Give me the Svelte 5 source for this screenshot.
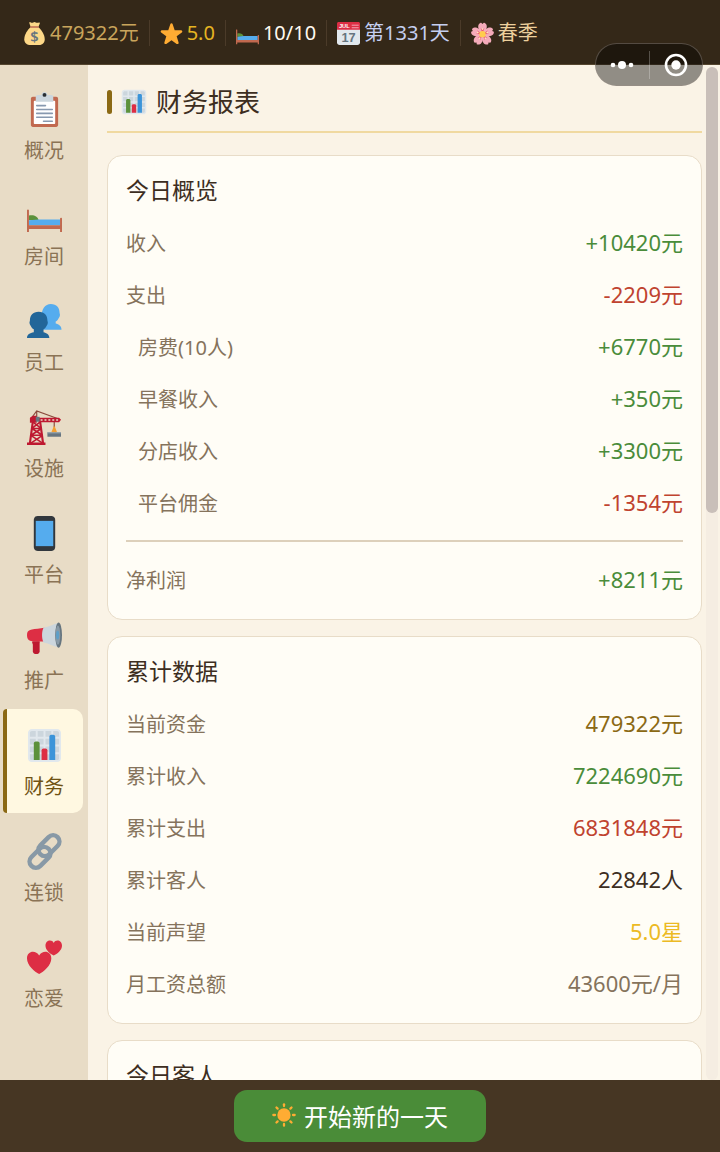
<script>
  const stats = [
    { icon: 'money', text: '479322元', tone: 'gold' },
    { icon: 'star', text: '5.0', tone: 'amber' },
    { icon: 'bed', text: '10/10', tone: 'plain' },
    { icon: 'calendar', text: '第1331天', tone: 'sky' },
    { icon: 'blossom', text: '春季', tone: 'sand' }
  ];

  const tabs = [
    { icon: 'clipboard', label: '概况' },
    { icon: 'bed', label: '房间' },
    { icon: 'people', label: '员工' },
    { icon: 'crane', label: '设施' },
    { icon: 'phone', label: '平台' },
    { icon: 'megaphone', label: '推广' },
    { icon: 'chart', label: '财务' },
    { icon: 'link', label: '连锁' },
    { icon: 'hearts', label: '恋爱' }
  ];

  let active = $state('财务');

  const today = [
    { label: '收入', value: '+10420元', tone: 'up' },
    { label: '支出', value: '-2209元', tone: 'down' },
    { label: '房费(10人)', value: '+6770元', tone: 'up', sub: true },
    { label: '早餐收入', value: '+350元', tone: 'up', sub: true },
    { label: '分店收入', value: '+3300元', tone: 'up', sub: true },
    { label: '平台佣金', value: '-1354元', tone: 'down', sub: true }
  ];

  const totals = [
    { label: '当前资金', value: '479322元', tone: 'fund' },
    { label: '累计收入', value: '7224690元', tone: 'up' },
    { label: '累计支出', value: '6831848元', tone: 'down' },
    { label: '累计客人', value: '22842人', tone: 'ink' },
    { label: '当前声望', value: '5.0星', tone: 'fame' },
    { label: '月工资总额', value: '43600元/月', tone: 'muted' }
  ];
</script>

{#snippet icon(name)}
  <svg class="icon" viewBox="0 0 36 36" aria-hidden="true">
    {#if name === 'money'}
      <path fill="#FDD888" d="M12 8C7 13 2 20 2 27c0 6 4 9 10 9h13c6 0 9-4 9-9 0-7-5-14-10-19z" />
      <path fill="#FDD888" d="M10 2c-1-2 1-2 3-1l2 0 3-1 3 1 3 0c2-1 3 0 2 2l-2 5H12z" />
      <rect fill="#BF6952" x="11" y="6.500" width="14" height="2.500" rx="1.200" />
      <text x="18" y="31" text-anchor="middle" font-family="Noto Sans" font-size="23" font-weight="600" fill="#67757F">$</text>
    {:else if name === 'star'}
      <path fill="#FFAC33" d="M27.287 34.627c-.404 0-.806-.124-1.152-.371L18 28.422l-8.135 5.834c-.343.247-.744.37-1.146.37-.408 0-.815-.127-1.164-.383-.681-.504-.963-1.389-.702-2.197l3.034-9.792-8.062-5.681c-.685-.505-.97-1.393-.708-2.205.264-.809 1.016-1.357 1.866-1.363l9.947-.014 3.179-9.549c.268-.804 1.022-1.348 1.871-1.348.849 0 1.603.543 1.871 1.348l3.133 9.549 9.994.014c.851.006 1.605.554 1.867 1.363.262.811-.022 1.7-.708 2.205l-8.064 5.681 3.034 9.792c.262.808-.021 1.693-.704 2.197-.345.256-.752.384-1.163.384z" />
    {:else if name === 'bed'}
      <path fill="#5C913B" d="M2 22v-4c4-1 9 0 10 5H2z" />
      <path fill="#55ACEE" d="M2 28v-5l10-1h22v6z" />
      <path fill="#C1694F" d="M0 12.500c0-1 2-1 2 0V28h32v-7c0-1 2-1 2 0v14h-2v-3H2v3H0z" />
    {:else if name === 'calendar'}
      <path fill="#E1E8ED" d="M36 32c0 2.209-1.791 4-4 4H4c-2.209 0-4-1.791-4-4V9h36z" />
      <path fill="#DD2E44" d="M0 12V3c0-2 1-3 3-3h30c2 0 3 1 3 3v9z" />
      <path stroke="#F4ABBA" stroke-width="1.500" d="M23 5h11M23 9h11" />
      <text x="3" y="9" font-family="Liberation Sans" font-size="9" font-weight="700" fill="#FFF">JUL</text>
      <text x="18" y="31" text-anchor="middle" font-family="Liberation Sans" font-size="20" font-weight="700" fill="#66757F">17</text>
    {:else if name === 'blossom'}
      {#each [0, 72, 144, 216, 288] as turn}
        <path fill="#F4ABBA" transform="rotate({turn} 18 19)" d="M18 19C12 14 10 8 12 4c1-2 3-3 4-3l2 2 2-2c1 0 3 1 4 3 2 4 0 10-6 15z" />
        <path fill="#EA596E" transform="rotate({turn} 18 19)" d="M18 19l-3-10 3 4 3-4z" />
      {/each}
      <circle fill="#FFCC4D" cx="18" cy="19" r="5" />
      <g fill="#FFE8B6">
        <circle cx="18" cy="11" r="1.300" /><circle cx="10.500" cy="16.500" r="1.300" /><circle cx="25.500" cy="16.500" r="1.300" />
        <circle cx="13.500" cy="25.500" r="1.300" /><circle cx="22.500" cy="25.500" r="1.300" />
      </g>
    {:else if name === 'clipboard'}
      <path fill="#C1694F" d="M32 34c0 1.104-.896 2-2 2H6c-1.104 0-2-.896-2-2V7c0-1.104.896-2 2-2h24c1.104 0 2 .896 2 2v27z" />
      <path fill="#FFF" d="M29 32c0 .553-.447 1-1 1H8c-.552 0-1-.447-1-1V10c0-.552.448-1 1-1h20c.553 0 1 .448 1 1v22z" />
      <path fill="#CCD6DD" d="M25 3h-4c0-1.657-1.343-3-3-3s-3 1.343-3 3h-4c-1.104 0-2 .896-2 2v5h18V5c0-1.104-.896-2-2-2z" />
      <circle fill="#292F33" cx="18" cy="3" r="2" />
      <path stroke="#8899AF" stroke-width="1.600" stroke-linecap="round" d="M10 14h9M10 18h16M10 22h16M10 26h16M17 30h9" />
    {:else if name === 'people'}
      <path fill="#55ACEE" d="M24.500 0c6 0 9 4 9 9 0 1 1 2 0 4-1 1-1 3-4 5v2c3 1 6 2 6 6.500H15V18c0-2 0-4 0-5 0-8 3.500-13 9.500-13z" />
      <path fill="#269" d="M12 8c6 0 9 4 9 9 0 1 1 2 0 4-1 1-1 3-4 5v3c3 1 6 2 6 6H0c0-4 3-5 7-6v-3c-3-2-3-4-4-5-1-2 0-3 0-4 0-5 3-9 9-9z" />
    {:else if name === 'crane'}
      <path fill="none" stroke="#8B4A3C" stroke-width="1.200" d="M4 9l6-8 22 8M10 1v8M28 12v6" />
      <path fill="none" stroke="#BE1931" stroke-width="2.200" d="M6 12L3 34M13.500 12l3 22" />
      <path fill="none" stroke="#BE1931" stroke-width="1.600" d="M5 19h10M4 26h12M5.500 12l9 7M14 12l-9 7M5 19l11 7M15 19L4 26M4 26l12 8M16 26L4 34" />
      <path fill="#BE1931" d="M0 33.500h19V36H0zM3 8l3-2h4v7H3zM12 8h21l2 2-2 2.500H12z" />
      <path fill="#66757F" d="M9 7h4v5H9z" />
      <path stroke="#E8DCC6" stroke-width="1.600" stroke-dasharray="2 2" d="M14 10.300h18" />
      <path fill="none" stroke="#F4A030" stroke-width="1.800" d="M28 18l-2 5M28 18l2 5M28 17v6" />
      <path fill="#67757F" d="M21 23h14v4.500H21z" />
      <path fill="#99AAB5" d="M21 23h14v1H21z" />
    {:else if name === 'phone'}
      <path fill="#31373D" d="M11 36s-4 0-4-4V4s0-4 4-4h14s4 0 4 4v28s0 4-4 4H11z" />
      <path fill="#55ACEE" d="M9 5h18v26H9z" />
    {:else if name === 'megaphone'}
      <path fill="#BE1931" d="M6 20h7v10c0 4-7 4-7 0V20z" />
      <path fill="#DD2E44" d="M4 8c5-1 9-1 14-2v14c-5 0-9 0-14-.500C1 19 0 16.500 0 13.500S1 8.500 4 8z" />
      <path fill="#BE1931" d="M5 20h8l-1 3H6z" />
      <path fill="#CCD6DD" d="M17 6c6-1 10-4 15-5v25c-5-1-9-4-15-5-2-4-2-11 0-15z" />
      <ellipse fill="#66757F" cx="32.500" cy="13.500" rx="3.500" ry="13" />
      <ellipse fill="#8899A6" cx="31.800" cy="13.500" rx="2.400" ry="10" />
      <ellipse fill="#5D9FC9" cx="31.500" cy="13.500" rx="1.600" ry="4.500" />
    {:else if name === 'chart'}
      <path fill="#CCD6DD" d="M31 2H5C3.343 2 2 3.343 2 5v26c0 1.657 1.343 3 3 3h26c1.657 0 3-1.343 3-3V5c0-1.657-1.343-3-3-3z" />
      <path fill="#E1E8ED" d="M31 1H5C2.791 1 1 2.791 1 5v26c0 2.209 1.791 4 4 4h26c2.209 0 4-1.791 4-4V5c0-2.209-1.791-4-4-4zm0 2c1.103 0 2 .897 2 2v4h-6V3h4zm-4 16h6v6h-6v-6zm0-2v-6h6v6h-6zM25 3v6h-6V3h6zm-6 8h6v6h-6v-6zm0 8h6v6h-6v-6zM17 3v6h-6V3h6zm-6 8h6v6h-6v-6zm0 8h6v6h-6v-6zM3 5c0-1.103.897-2 2-2h4v6H3V5zm0 6h6v6H3v-6zm0 8h6v6H3v-6zm2 14c-1.103 0-2-.897-2-2v-4h6v6H5zm6 0v-6h6v6h-6zm8 0v-6h6v6h-6zm12 0h-4v-6h6v4c0 1.103-.897 2-2 2z" />
      <path fill="#5C913B" d="M13 33H7V16c0-1.104.896-2 2-2h2c1.104 0 2 .896 2 2v17z" />
      <path fill="#3B94D9" d="M29 33h-6V9c0-1.104.896-2 2-2h2c1.104 0 2 .896 2 2v24z" />
      <path fill="#DD2E44" d="M21 33h-6V23c0-1.104.896-2 2-2h2c1.104 0 2 .896 2 2v10z" />
    {:else if name === 'link'}
      <g fill="none" stroke="#8899A6" stroke-width="4.600" transform="rotate(-45 18 18)">
        <rect x="-2" y="12.500" width="25" height="13" rx="6.500" />
        <rect x="13" y="10.500" width="25" height="13" rx="6.500" />
      </g>
    {:else if name === 'hearts'}
      <g fill="#DD2E44">
        <path d="M12.500 35C8 33 0 26 0 19c0-8 9-9 12.500-3C16 10 25 11 25 19c0 7-8 14-12.500 16z" />
        <path d="M27.500 16C24 14.500 19 10.500 19 6c0-6 6.500-7 8.500-3C29.500-1 36 0 36 6c0 4.500-5 8.500-8.500 10z" />
      </g>
    {:else if name === 'sun'}
      <circle fill="#FFAC33" cx="18" cy="18" r="10" />
      <g stroke="#FFAC33" stroke-width="3.400" stroke-linecap="round">
        {#each [0, 45, 90, 135, 180, 225, 270, 315] as turn}
          <path transform="rotate({turn} 18 18)" d="M18 2v2.500" />
        {/each}
      </g>
    {/if}
  </svg>
{/snippet}

{#snippet row(item)}
  <div class="row" class:sub={item.sub}>
    <dt>{item.label}</dt>
    <dd class={item.tone}>{item.value}</dd>
  </div>
{/snippet}

<div class="app">
  <header class="topbar">
    {#each stats as s}
      <span class="stat {s.tone}">{@render icon(s.icon)}<span>{s.text}</span></span>
    {/each}
    <div class="capsule">
      <button type="button" aria-label="更多">
        <svg viewBox="0 0 24 24" aria-hidden="true">
          <g fill="#fff"><circle cx="3" cy="12" r="2.300" /><circle cx="12" cy="12" r="4" /><circle cx="21" cy="12" r="2.300" /></g>
        </svg>
      </button>
      <button type="button" aria-label="关闭">
        <svg viewBox="0 0 24 24" aria-hidden="true">
          <circle cx="12" cy="12" r="10" fill="none" stroke="#fff" stroke-width="2.600" /><circle cx="12" cy="12" r="4.700" fill="#fff" />
        </svg>
      </button>
    </div>
  </header>

  <div class="body">
    <nav class="sidebar">
      {#each tabs as t}
        <button type="button" class="tab" class:active={active === t.label} onclick={() => (active = t.label)}>
          {@render icon(t.icon)}
          <span>{t.label}</span>
        </button>
      {/each}
    </nav>

    <main>
      <div class="scroller">
        <h1>{@render icon('chart')}<span>财务报表</span></h1>

        <section class="card">
          <h2>今日概览</h2>
          <dl>
            {#each today as item}{@render row(item)}{/each}
          </dl>
          <dl class="net">
            {@render row({ label: '净利润', value: '+8211元', tone: 'up' })}
          </dl>
        </section>

        <section class="card">
          <h2>累计数据</h2>
          <dl>
            {#each totals as item}{@render row(item)}{/each}
          </dl>
        </section>

        <section class="card">
          <h2>今日客人</h2>
        </section>
      </div>
      <div class="track"><div class="thumb"></div></div>
    </main>
  </div>

  <footer>
    <button type="button" class="start">{@render icon('sun')}<span>开始新的一天</span></button>
  </footer>
</div>

<style>
  :global(body) {
    margin: 0;
  }
  .app {
    display: flex;
    flex-direction: column;
    height: 100vh;
    font-family: 'Noto Sans', 'Noto Sans CJK SC', sans-serif;
    color: #3d2e1f;
    background: #faf3e6;
  }
  button {
    font: inherit;
    border: 0;
    padding: 0;
    background: none;
    cursor: pointer;
  }
  .icon {
    display: block;
    flex: none;
    overflow: visible;
  }

  .topbar {
    position: relative;
    z-index: 2;
    display: flex;
    align-items: center;
    box-sizing: border-box;
    height: 65px;
    padding: 2px 13px 0;
    background: #342818;
    border-bottom: 1px solid #55462f;
  }
  .stat {
    display: flex;
    align-items: center;
    gap: 4px;
    height: 26px;
    padding: 0 10px;
    font-size: 20px;
    line-height: 26px;
    white-space: nowrap;
  }
  .stat + .stat {
    border-left: 1px solid #4b3b29;
  }
  .stat .icon {
    width: 23px;
    height: 23px;
  }
  .gold { color: #c9a55c; }
  .amber { color: #e6b422; }
  .plain { color: #fffaf0; }
  .sky { color: #c5cff0; }
  .sand { color: #ecd09c; }

  .capsule {
    position: absolute;
    top: 43px;
    right: 17px;
    display: flex;
    align-items: center;
    box-sizing: border-box;
    width: 108px;
    height: 43px;
    border: 1px solid rgba(150, 140, 130, 0.45);
    border-radius: 22px;
    background: rgba(0, 0, 0, 0.42);
  }
  .capsule button {
    display: flex;
    flex: 1;
    align-items: center;
    justify-content: center;
    height: 28px;
  }
  .capsule button + button {
    border-left: 1px solid rgba(255, 255, 255, 0.25);
  }
  .capsule svg {
    width: 24px;
    height: 24px;
  }

  .body {
    display: flex;
    flex: 1;
    min-height: 0;
  }
  .sidebar {
    display: flex;
    flex: none;
    flex-direction: column;
    gap: 2px;
    box-sizing: border-box;
    width: 88px;
    padding: 8px 5px 0 3px;
    overflow: hidden;
    background: #e8dcc6;
  }
  .tab {
    display: flex;
    flex: none;
    flex-direction: column;
    align-items: center;
    gap: 10px;
    box-sizing: border-box;
    height: 104px;
    padding: 19px 2px 0 0;
    border-left: 4px solid transparent;
    border-radius: 4px 10px 10px 4px;
    font-size: 20px;
    line-height: 28px;
    color: #8a7355;
  }
  .tab .icon {
    width: 35px;
    height: 35px;
  }
  .tab.active {
    color: #6f5213;
    background: #fff8e1;
    border-left-color: #8b6914;
  }

  main {
    position: relative;
    flex: 1;
    min-width: 0;
  }
  .scroller {
    box-sizing: border-box;
    height: 100%;
    padding: 17px 18px 16px 19px;
    overflow-y: auto;
    scrollbar-width: none;
  }
  .track {
    position: absolute;
    top: 2px;
    right: 2px;
    bottom: 0;
    width: 12px;
    border-radius: 6px;
    background: #f5ede2;
  }
  .thumb {
    height: 44%;
    border-radius: 6px;
    background: #c9bfb9;
  }

  h1 {
    display: flex;
    align-items: center;
    gap: 9px;
    margin: 0 0 22px;
    padding-bottom: 9px;
    border-bottom: 2px solid #f0d9a0;
    font-size: 26px;
    font-weight: 400;
    line-height: 40px;
  }
  h1::before {
    content: '';
    width: 5px;
    height: 24px;
    border-radius: 3px;
    background: #8b6914;
  }
  h1 .icon {
    width: 26px;
    height: 26px;
  }

  .card {
    margin-bottom: 16px;
    padding: 18px 18px 14px;
    border: 1px solid #e8dcc8;
    border-radius: 15px;
    background: #fffdf6;
  }
  h2 {
    margin: 0 0 10px;
    font-size: 23px;
    font-weight: 400;
    line-height: 32px;
  }
  dl {
    margin: 0;
  }
  .row {
    display: flex;
    align-items: center;
    justify-content: space-between;
    height: 52px;
    font-size: 22px;
  }
  .row.sub {
    padding-left: 12px;
  }
  dt {
    font-size: 20px;
    color: #85735c;
  }
  dd {
    margin: 0;
    padding-bottom: 3px;
  }
  .net {
    margin-top: 12px;
    padding-top: 11px;
    border-top: 2px solid #ddd0bb;
  }
  .up { color: #4a8c3a; }
  .down { color: #c0432f; }
  .fund { color: #8b6914; }
  .ink { color: #3d2e1f; }
  .fame { color: #ecba24; }
  .muted { color: #85735c; }

  footer {
    display: flex;
    flex: none;
    align-items: center;
    justify-content: center;
    height: 72px;
    background: #463623;
  }
  .start {
    display: flex;
    align-items: center;
    gap: 8px;
    height: 52px;
    padding: 0 38px 2px;
    border-radius: 13px;
    font-size: 24px;
    color: #fff;
    background: #4a8c38;
  }
  .start .icon {
    width: 24px;
    height: 24px;
  }
</style>
